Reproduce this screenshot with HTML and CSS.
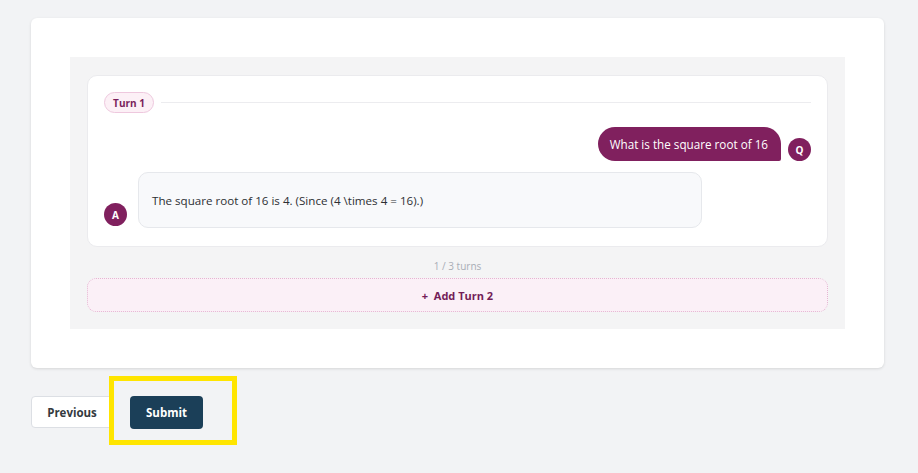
FILE: index.html
```html
<!DOCTYPE html>
<html lang="en">
<head>
<meta charset="utf-8">
<title>Conversation</title>
<link rel="stylesheet" href="styles.css">
</head>
<body>
<div class="page">
  <div class="card">
    <div class="editor">
      <div class="turn">
        <div class="turn-head">
          <span class="pill">Turn 1</span>
          <span class="rule"></span>
        </div>
        <div class="row row-q">
          <div class="bubble-q">What is the square root of 16</div>
          <div class="avatar">Q</div>
        </div>
        <div class="row row-a">
          <div class="avatar">A</div>
          <div class="bubble-a">The square root of 16 is 4. (Since (4 \times 4 = 16).)</div>
        </div>
      </div>
      <div class="count">1 / 3 turns</div>
      <button class="add">+&nbsp; Add Turn 2</button>
    </div>
  </div>
  <div class="actions">
    <button class="btn btn-prev">Previous</button>
    <button class="btn btn-submit">Submit</button>
    <div class="highlight"></div>
  </div>
</div>
</body>
</html>
```

FILE: styles.css
```css
* { box-sizing: border-box; }
html, body { margin: 0; padding: 0; }
body {
  background: #f2f3f5;
  font-family: "Open Sans", "Noto Sans", sans-serif;
  width: 918px;
  height: 473px;
  overflow: hidden;
}
.page { padding: 18px 34px 0 31px; }
.card {
  background: #fff;
  border-radius: 6px;
  box-shadow: 0 1px 3px rgba(0,0,0,0.12);
  padding: 39px;
  height: 350px;
}
.editor {
  background: #f4f4f5;
  padding: 18px 17px 17px 17px;
  height: 272px;
  display: flex;
  flex-direction: column;
}
.turn {
  background: #fff;
  border: 1px solid #ebebee;
  border-radius: 10px;
  padding: 16px 16px 17px 16px;
  height: 172px;
}
.turn-head {
  display: flex;
  align-items: center;
  gap: 7px;
}
.pill {
  display: inline-flex;
  align-items: center;
  justify-content: center;
  height: 21px;
  width: 50px;
  border: 1px solid #eec8de;
  background: #fcf0f6;
  color: #7a1f5c;
  border-radius: 11px;
  font-size: 10px;
  font-weight: 700;
}
.rule { flex: 1; height: 1px; background: #ececef; }
.row { display: flex; align-items: flex-end; gap: 7px; }
.row-q { justify-content: flex-end; margin-top: 14px; }
.row-a { margin-top: 11px; gap: 11px; }
.bubble-q {
  background: #80205e;
  color: #fff;
  font-size: 11.7px;
  height: 34px;
  line-height: 34px;
  padding: 0 13px 0 12px;
  border-radius: 17px 17px 2px 17px;
}
.avatar {
  width: 23px;
  height: 23px;
  border-radius: 50%;
  background: #80205e;
  color: #fff;
  font-size: 10px;
  font-weight: 700;
  display: flex;
  align-items: center;
  justify-content: center;
  flex: 0 0 auto;
}
.row-a .avatar { margin-bottom: 2px; }
.bubble-a {
  flex: 0 0 564px;
  height: 56px;
  background: #f8f9fb;
  border: 1px solid #e6e8ec;
  border-radius: 10px;
  padding: 0 13px;
  display: flex;
  align-items: center;
  font-size: 11.6px;
  color: #2d2f33;
}
.count {
  text-align: center;
  font-size: 10px;
  color: #a9adb5;
  margin-top: 12px;
  height: 19px;
}
.add {
  height: 34px;
  border: 1.5px dotted #e5b6d2;
  border-radius: 9px;
  background: #fbf0f7;
  color: #731d58;
  font-family: inherit;
  font-size: 11px;
  font-weight: 700;
  width: 100%;
}
.actions {
  position: relative;
  display: flex;
  gap: 17px;
  margin-top: 28px;
}
.btn {
  height: 32px;
  border-radius: 4px;
  font-family: inherit;
  font-size: 11.5px;
  font-weight: 700;
  cursor: pointer;
}
.btn-prev {
  width: 82px;
  background: #fff;
  border: 1px solid #dcdfe4;
  color: #343a40;
}
.btn-submit {
  width: 73px;
  height: 33px;
  background: #1b3f58;
  border: none;
  color: #fff;
}
.highlight {
  position: absolute;
  left: 78px;
  top: -20px;
  width: 128px;
  height: 69px;
  border: 5px solid #ffe500;
  pointer-events: none;
}
```
